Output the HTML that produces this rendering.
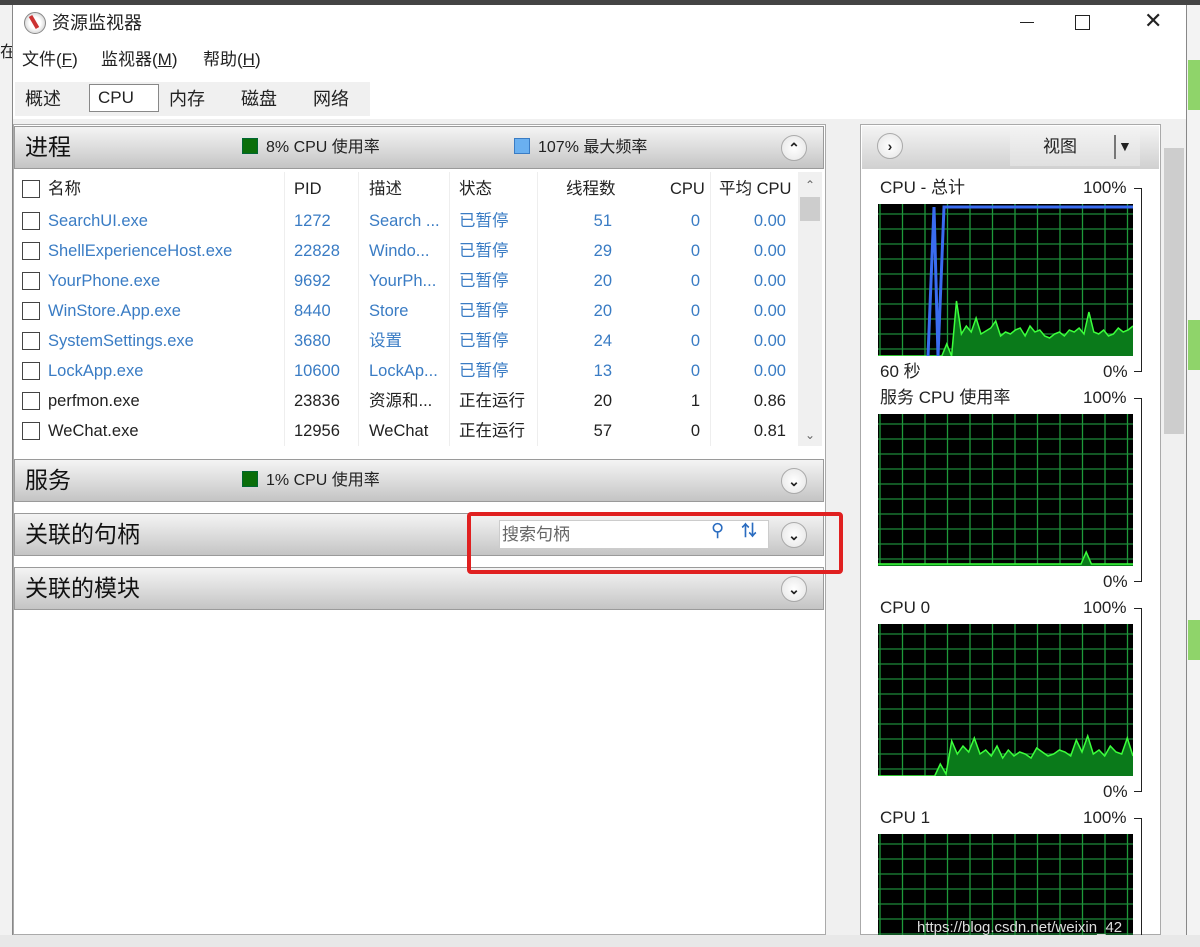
<!DOCTYPE html>
<html><head><meta charset="utf-8"><style>
*{margin:0;padding:0;box-sizing:border-box}
body{width:1200px;height:947px;overflow:hidden;background:#fff;font-family:"Liberation Sans","Noto Sans CJK SC",sans-serif;color:#222;position:relative;line-height:22px}
.a{position:absolute;white-space:nowrap}
.hdr{position:absolute;left:14px;width:810px;height:43px;background:linear-gradient(#f4f4f4,#d8d8d8 60%,#c4c4c4);border:1px solid #9a9a9a;}
.hdr .t{position:absolute;left:10px;top:6px;font-size:23px;line-height:28px;color:#111}
.circ{position:absolute;width:26px;height:26px;border-radius:50%;background:radial-gradient(#fff,#e4e4e4);border:1px solid #aaa;font-size:14px;text-align:center;line-height:24px;font-weight:bold;color:#222}
.row{position:absolute;left:14px;width:780px;height:30px;font-size:16.5px}
.row span{position:absolute;top:4px;line-height:22px}
.cb{position:absolute;left:8px;top:6px;width:18px;height:18px;border:1px solid #444;background:#fff}
.b{color:#3a7cc4}
.sq{display:inline-block;width:16px;height:16px;vertical-align:-2px;margin-right:8px}
.lbl{position:absolute;font-size:17px;line-height:22px}
</style></head><body>
<div class="a" style="left:0;top:0;width:1200px;height:5px;background:#444"></div>
<div class="a" style="left:0;top:5px;width:12px;height:942px;background:#f2f2f2"></div>
<div class="a" style="left:0;top:42px;font-size:16px">在</div>
<div class="a" style="left:1186px;top:5px;width:14px;height:942px;background:#f3f3f3"></div>
<div class="a" style="left:1188px;top:60px;width:12px;height:50px;background:#8fd46a"></div>
<div class="a" style="left:1188px;top:320px;width:12px;height:50px;background:#8fd46a"></div>
<div class="a" style="left:1188px;top:620px;width:12px;height:40px;background:#8fd46a"></div>
<div class="a" style="left:12px;top:5px;width:1175px;height:930px;background:#fff;border-left:1px solid #888;border-right:1px solid #888"></div>
<!-- title -->
<div class="a" style="left:24px;top:12px;width:22px;height:22px;border-radius:50%;background:radial-gradient(#fff 40%,#bbb);border:1px solid #888"></div>
<div class="a" style="left:32px;top:15px;width:4px;height:14px;background:#c33;transform:rotate(-30deg)"></div>
<div class="a" style="left:52px;top:12px;font-size:18px">资源监视器</div>
<div class="a" style="left:1020px;top:22px;width:14px;height:1px;background:#222"></div>
<div class="a" style="left:1075px;top:15px;width:15px;height:15px;border:1px solid #222"></div>
<div class="a" style="left:1144px;top:10px;font-size:22px;font-weight:300">✕</div>
<!-- menu -->
<div class="a" style="left:22px;top:49px;font-size:17px">文件(<u>F</u>)</div>
<div class="a" style="left:101px;top:49px;font-size:17px">监视器(<u>M</u>)</div>
<div class="a" style="left:203px;top:49px;font-size:17px">帮助(<u>H</u>)</div>
<!-- tabs -->
<div class="a" style="left:13px;top:80px;width:1173px;height:38px;background:#fff"></div>
<div class="a" style="left:15px;top:82px;width:355px;height:34px;background:#f0f0f0"></div>
<div class="a" style="left:25px;top:88px;font-size:18px">概述</div>
<div class="a" style="left:89px;top:84px;width:70px;height:28px;border:1px solid #888;background:#fff;font-size:17px;padding:2px 0 0 8px">CPU</div>
<div class="a" style="left:169px;top:88px;font-size:18px">内存</div>
<div class="a" style="left:241px;top:88px;font-size:18px">磁盘</div>
<div class="a" style="left:313px;top:88px;font-size:18px">网络</div>
<div class="a" style="left:13px;top:119px;width:1173px;height:816px;background:#f0f0f0"></div>
<div class="a" style="left:13px;top:124px;width:813px;height:811px;background:#fff;border:1px solid #aaa"></div>
<!-- process -->
<div class="hdr" style="top:126px"><div class="t">进程</div>
<div class="a" style="left:227px;top:10px;font-size:16px"><span class="sq" style="background:#0a6e0a;border:1px solid #063"></span>8% CPU 使用率</div>
<div class="a" style="left:499px;top:10px;font-size:16px"><span class="sq" style="background:#6ab0f0;border:1px solid #3a7cc4"></span>107% 最大频率</div>
<div class="circ" style="left:766px;top:8px">⌃</div></div>
<div class="row" style="top:174px"><div class="cb"></div><span style="left:34px">名称</span><span style="left:280px">PID</span><span style="left:355px">描述</span><span style="left:445px">状态</span><span style="left:552px">线程数</span><span style="left:656px">CPU</span><span style="left:705px">平均 CPU</span></div>
<div class="a" style="left:284px;top:172px;width:1px;height:274px;background:#eee"></div>
<div class="a" style="left:358px;top:172px;width:1px;height:274px;background:#eee"></div>
<div class="a" style="left:449px;top:172px;width:1px;height:274px;background:#eee"></div>
<div class="a" style="left:537px;top:172px;width:1px;height:274px;background:#eee"></div>
<div class="a" style="left:710px;top:172px;width:1px;height:274px;background:#eee"></div>
<div class="a" style="left:798px;top:172px;width:24px;height:274px;background:#f0f0f0"></div>
<div class="a" style="left:800px;top:197px;width:20px;height:24px;background:#cdcdcd"></div>
<div class="a" style="left:805px;top:174px;font-size:12px;color:#666">⌃</div>
<div class="a" style="left:805px;top:424px;font-size:12px;color:#666">⌄</div>
<div id="rows"></div>
<div class="hdr" style="top:459px"><div class="t">服务</div>
<div class="a" style="left:227px;top:10px;font-size:16px"><span class="sq" style="background:#0a6e0a;border:1px solid #063"></span>1% CPU 使用率</div>
<div class="circ" style="left:766px;top:8px">⌄</div></div>
<div class="hdr" style="top:513px"><div class="t">关联的句柄</div>
<div class="a" style="left:484px;top:6px;width:270px;height:29px;background:#fff;border:1px solid #ccc;font-size:17px;color:#666;padding:3px 0 0 2px">搜索句柄</div>
<div class="a" style="left:696px;top:5px;font-size:18px;color:#2a6cc0">⚲</div>
<div class="a" style="left:726px;top:7px;font-size:16px;color:#2a6cc0;font-weight:bold">⇅</div>
<div class="circ" style="left:766px;top:8px">⌄</div></div>
<div class="hdr" style="top:567px"><div class="t">关联的模块</div><div class="circ" style="left:766px;top:8px">⌄</div></div>
<div class="a" style="left:467px;top:512px;width:376px;height:62px;border:4px solid #e02020;border-radius:4px"></div>
<!-- right panel -->
<div class="a" style="left:860px;top:124px;width:301px;height:811px;background:#fff;border:1px solid #aaa"></div>
<div class="a" style="left:862px;top:126px;width:297px;height:43px;background:linear-gradient(#f4f4f4,#d0d0d0)"></div>
<div class="circ" style="left:877px;top:133px">›</div>
<div class="a" style="left:1010px;top:129px;width:130px;height:37px;background:linear-gradient(#f2f2f2,#e0e0e0);font-size:17px;padding:7px 0 0 33px">视图<span style="position:absolute;left:104px;top:6px;width:2px;height:24px;background:#777"></span><span style="position:absolute;left:108px;top:6px;font-size:14px">▼</span></div>
<div class="a" style="left:1162px;top:124px;width:24px;height:811px;background:#f0f0f0"></div>
<div class="a" style="left:1164px;top:148px;width:20px;height:286px;background:#cdcdcd"></div>
<div id="graphs"></div>
<div class="a" style="left:0;top:935px;width:1200px;height:12px;background:#e8e8e8"></div>
<div class="a" style="left:917px;top:917px;font-size:15px;color:#ddd">https://blog.csdn.net/weixin_42</div>
<script>
var R=[["SearchUI.exe","1272","Search ...","已暂停","51","0","0.00",1],["ShellExperienceHost.exe","22828","Windo...","已暂停","29","0","0.00",1],["YourPhone.exe","9692","YourPh...","已暂停","20","0","0.00",1],["WinStore.App.exe","8440","Store","已暂停","20","0","0.00",1],["SystemSettings.exe","3680","设置","已暂停","24","0","0.00",1],["LockApp.exe","10600","LockAp...","已暂停","13","0","0.00",1],["perfmon.exe","23836","资源和...","正在运行","20","1","0.86",0],["WeChat.exe","12956","WeChat","正在运行","57","0","0.81",0]];
var h="";R.forEach(function(r,i){var c=r[7]?' class="b"':'';h+='<div class="row" style="top:'+(206+i*30)+'px"><div class="cb"></div><span'+c+' style="left:34px">'+r[0]+'</span><span'+c+' style="left:280px">'+r[1]+'</span><span'+c+' style="left:355px">'+r[2]+'</span><span'+c+' style="left:445px">'+r[3]+'</span><span'+c+' style="right:182px">'+r[4]+'</span><span'+c+' style="right:94px">'+r[5]+'</span><span'+c+' style="right:8px">'+r[6]+'</span></div>';});
document.getElementById("rows").innerHTML=h;
function g(top,ht,title,data,blue,bottom){var s='<div class="lbl" style="left:880px;top:'+(top-27)+'px">'+title+'</div><div class="lbl" style="left:1083px;top:'+(top-27)+'px">100%</div>';
s+='<div class="a" style="left:1134px;top:'+(top-16)+'px;width:8px;height:'+(bottom?ht+32:935-top+16)+'px;border-top:1px solid #222;border-right:1px solid #222;border-bottom:'+(bottom?'1px solid #222':'0')+'"></div>';
var sv='<svg class="a" style="left:878px;top:'+top+'px" width="255" height="'+ht+'"><rect width="255" height="'+ht+'" fill="#000"/>';
for(var x=2;x<255;x+=22.5)sv+='<line x1="'+x+'" y1="0" x2="'+x+'" y2="'+ht+'" stroke="#1e9a3a" stroke-width="1.3"/>';
for(var y=10;y<ht;y+=15)sv+='<line x1="0" y1="'+y+'" x2="255" y2="'+y+'" stroke="#1e8a3a" stroke-width="1.3"/>';
if(data){var p="0,"+ht+" ";data.forEach(function(v,i){p+=(i*255/(data.length-1)).toFixed(1)+","+(ht-v)+" "});sv+='<polygon points="'+p+'255,'+ht+'" fill="#0a7a1a"/><polyline points="'+p.slice(p.indexOf(" ")+1)+'" fill="none" stroke="#3cff3c" stroke-width="1.5"/>';}
if(blue)sv+='<polyline points="50,'+ht+' 56,3 60,'+ht+' 66,3 255,3" fill="none" stroke="#3a6cf0" stroke-width="3"/>';
sv+='</svg>';s+=sv;if(bottom)s+='<div class="lbl" style="left:880px;top:'+(top+ht+5)+'px">'+(blue?'60 秒':'')+'</div><div class="lbl" style="left:1103px;top:'+(top+ht+5)+'px">0%</div>';return s;}
var d1=[0,0,0,0,0,0,0,0,0,0,0,0,0,0,12,0,55,22,30,24,38,22,25,28,35,20,24,22,26,28,20,30,24,26,20,18,22,24,20,26,24,28,22,44,24,22,26,20,22,28,24,26,30];
var d2=[];for(var i=0;i<50;i++)d2.push(i==40?14:2);
var d3=[0,0,0,0,0,0,0,0,0,0,0,12,2,35,22,30,24,38,22,26,20,30,18,26,20,24,22,18,28,24,20,22,26,24,20,36,24,40,22,26,20,30,24,22,38,20];
var G=g(204,152,"CPU - 总计",d1,1,1)+g(414,152,"服务 CPU 使用率",d2,0,1)+g(624,152,"CPU 0",d3,0,1)+g(834,101,"CPU 1",null,0,0);
document.getElementById("graphs").innerHTML=G;
</script>
</body></html>
